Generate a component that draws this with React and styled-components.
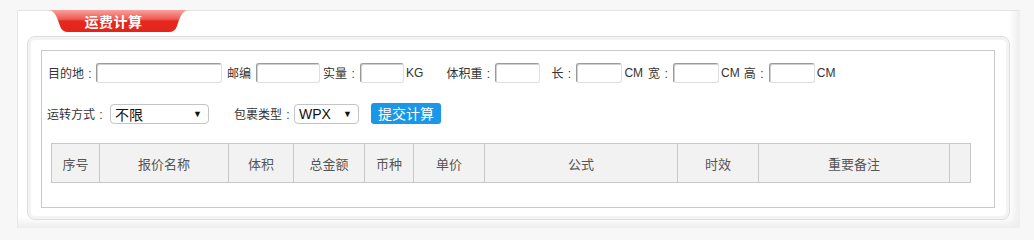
import styled, { createGlobalStyle } from 'styled-components'

const GlobalStyle = createGlobalStyle`
    html, body {
        margin: 0;
        padding: 0;
        background: #f7f7f7;
        font-family: "Liberation Sans", "Noto Sans CJK SC", sans-serif;
        color: #333;
    }
`

const Page = styled.div`
    padding: 10px 0 10px 17px;
`

const OuterPanel = styled.div`
    width: 1003px;
    box-sizing: border-box;
    background: #fff;
    border-top: 1px solid #e4e4e4;
    border-left: 1px solid #e8e8e8;
    box-shadow: inset -9px -9px 9px -3px rgba(0, 0, 0, 0.07);
    padding: 0 10px 8px 9px;
`

const Tab = styled.div`
    position: relative;
    margin-top: -1px;
    margin-left: 22px;
    width: 139px;
    height: 22px;
    display: flex;
    align-items: center;
    justify-content: center;
    padding-right: 10px;
    box-sizing: border-box;

    svg {
        position: absolute;
        left: 0;
        top: 0;
    }

    span {
        position: relative;
        color: #fff;
        font-weight: bold;
        font-size: 14px;
        font-family: "Noto Sans CJK SC", sans-serif;
        letter-spacing: 0.5px;
    }
`

const InnerPanel = styled.div`
    margin-top: 4px;
    border: 1px solid #dedede;
    border-radius: 8px;
    box-shadow: inset 0 0 0 3px #f3f3f3;
    padding: 13px 14px 11px 13px;
`

const FormBox = styled.div`
    border: 1px solid #c9c9c9;
    background: #fff;
    padding: 11px 0 24px 0;
`

const Row = styled.div`
    display: flex;
    align-items: center;
    height: 21px;
    padding-left: ${p => p.$pl || 6}px;
    margin-bottom: ${p => p.$mb || 0}px;
    font-size: 12px;
`

const Label = styled.span`
    margin-left: ${p => p.$ml || 0}px;
    margin-right: ${p => p.$mr || 0}px;
    white-space: nowrap;
    color: #333;
`

const Colon = styled.span`
    display: inline-block;
    width: 12px;
    text-align: center;
`

const Unit = styled.span`
    margin-left: 2px;
    font-size: 12px;
    color: #333;
`

const Input = styled.input`
    width: ${p => p.$w}px;
    height: 20px;
    box-sizing: border-box;
    border: 1px solid;
    border-color: #9a9a9a #dedede #dedede #9a9a9a;
    box-shadow: inset 1px 1px 0 #d0d0d0;
    border-radius: 3px;
    padding: 0 3px;
    background: #fff;
    outline: none;
`

const Select = styled.div`
    width: ${p => p.$w}px;
    height: 20px;
    box-sizing: border-box;
    border: 1px solid #c4c4c4;
    border-radius: 4px;
    margin-left: ${p => p.$ml || 0}px;
    display: flex;
    align-items: center;
    justify-content: space-between;
    padding: 0 6px 0 4px;
    font-size: 14px;
    color: #111;
    background: #fff;

    i {
        font-style: normal;
        font-size: 9px;
        color: #111;
    }
`

const Button = styled.button`
    margin-left: 12px;
    width: 70px;
    height: 21px;
    border: none;
    border-radius: 3px;
    background: #1b97ea;
    color: #fff;
    font-size: 14px;
    font-family: "Noto Sans CJK SC", sans-serif;
    padding: 0;
    line-height: 21px;
`

const Table = styled.table`
    margin: 19px 0 0 9px;
    width: 919px;
    border-collapse: collapse;
    table-layout: fixed;

    th {
        height: 38px;
        background: #f2f2f2;
        border: 1px solid #c8c8c8;
        font-weight: normal;
        font-size: 13px;
        color: #555;
        padding: 0;
        font-family: "Noto Sans CJK SC", sans-serif;
    }
`

const columns = [
    ['序号', 48],
    ['报价名称', 129],
    ['体积', 65],
    ['总金额', 71],
    ['币种', 49],
    ['单价', 71],
    ['公式', 193],
    ['时效', 81],
    ['重要备注', 191],
    ['', 21],
]

const App = () => {
    return (
        <Page>
            <GlobalStyle />
            <OuterPanel>
                <Tab>
                    <svg width="139" height="22" viewBox="0 0 139 22">
                        <defs>
                            <linearGradient id="tabRed" x1="0" y1="0" x2="0" y2="1">
                                <stop offset="0" stopColor="#f9a09c" />
                                <stop offset="0.42" stopColor="#ef5a52" />
                                <stop offset="0.5" stopColor="#e6281e" />
                                <stop offset="1" stopColor="#e4241a" />
                            </linearGradient>
                        </defs>
                        <path d="M0,0 H139 C133,1 131,7 128,16 Q126,22 120,22 H19 Q13,22 11,16 C8,7 6,1 0,0 Z" fill="url(#tabRed)" />
                    </svg>
                    <span>运费计算</span>
                </Tab>
                <InnerPanel>
                    <FormBox>
                        <Row $mb={20}>
                            <Label>目的地<Colon>:</Colon></Label>
                            <Input $w={126} />
                            <Label $ml={5} $mr={5}>邮编</Label>
                            <Input $w={64} />
                            <Label $ml={3} $mr={1}>实量<Colon>:</Colon></Label>
                            <Input $w={44} />
                            <Unit>KG</Unit>
                            <Label $ml={23} $mr={1}>体积重<Colon>:</Colon></Label>
                            <Input $w={45} />
                            <Label $ml={11} $mr={1}>长<Colon>:</Colon></Label>
                            <Input $w={46} />
                            <Unit>CM</Unit>
                            <Label $ml={5} $mr={1}>宽<Colon>:</Colon></Label>
                            <Input $w={46} />
                            <Unit>CM</Unit>
                            <Label $ml={4} $mr={1}>高<Colon>:</Colon></Label>
                            <Input $w={46} />
                            <Unit>CM</Unit>
                        </Row>
                        <Row $pl={5}>
                            <Label>运转方式<Colon>:</Colon></Label>
                            <Select $w={99} $ml={3}>
                                <span>不限</span>
                                <i>▼</i>
                            </Select>
                            <Label $ml={25}>包裹类型<Colon>:</Colon></Label>
                            <Select $w={65}>
                                <span>WPX</span>
                                <i>▼</i>
                            </Select>
                            <Button>提交计算</Button>
                        </Row>
                        <Table>
                            <colgroup>
                                {columns.map(([name, w], i) => (
                                    <col key={i} style={{ width: w }} />
                                ))}
                            </colgroup>
                            <thead>
                                <tr>
                                    {columns.map(([name], i) => (
                                        <th key={i}>{name}</th>
                                    ))}
                                </tr>
                            </thead>
                        </Table>
                    </FormBox>
                </InnerPanel>
            </OuterPanel>
        </Page>
    )
}

export default App
